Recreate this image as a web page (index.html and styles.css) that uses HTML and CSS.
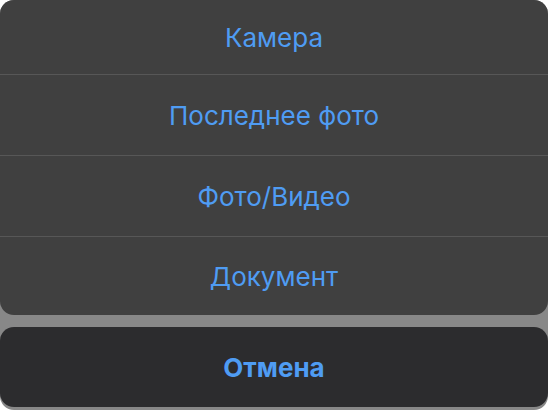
FILE: index.html
```html
<!DOCTYPE html>
<html lang="ru">
<head>
  <meta charset="UTF-8">
  <meta name="viewport" content="width=device-width, initial-scale=1.0">
  <title>Выбор вложения</title>
  <link rel="stylesheet" href="styles.css">
</head>
<body>
  <div class="overlay">
    <div class="sheet">
      <button class="action">Камера</button>
      <button class="action">Последнее фото</button>
      <button class="action">Фото/Видео</button>
      <button class="action">Документ</button>
    </div>
    <div class="sheet cancel">
      <button class="action action-cancel">Отмена</button>
    </div>
  </div>
</body>
</html>
```

FILE: styles.css
```css
* { margin: 0; padding: 0; box-sizing: border-box; font-family: 'Inter', 'Liberation Sans', sans-serif; }
body { background: #fff; width: 548px; height: 410px; overflow: hidden; }
.overlay { height: 410px; background: #888888; border-radius: 14px; display: flex; flex-direction: column; gap: 12px; }
.sheet { background: #404040; border-radius: 14px; display: flex; flex-direction: column; overflow: hidden; }
.action { height: 81px; border: none; border-top: 1px solid #575757; background: transparent; color: #4f9cf3; font-size: 26px; font-weight: 400; cursor: pointer; display: flex; align-items: center; justify-content: center; }
.action:first-child { height: 74px; border-top: none; }
.action:last-child { height: 79px; }
.cancel { background: #2c2c2e; }
.action-cancel { height: 80px !important; font-weight: 700; }
```
